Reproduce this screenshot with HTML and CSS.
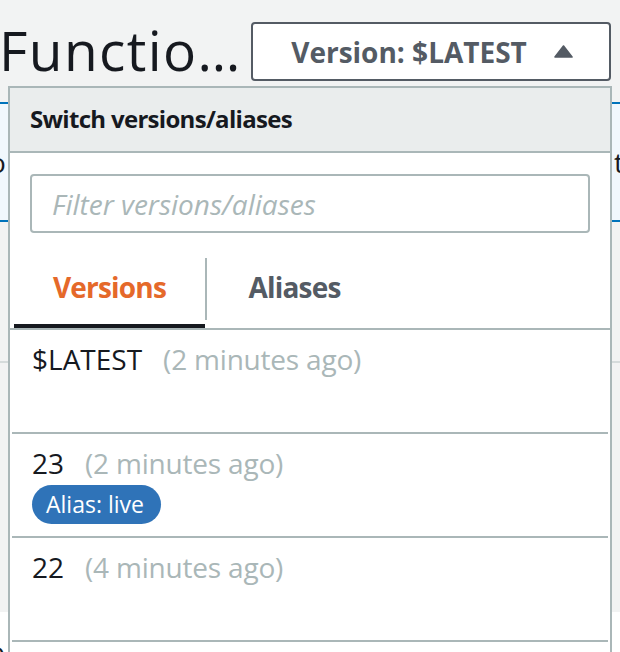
FILE: index.html
```html
<!DOCTYPE html>
<html lang="en">
<head>
<meta charset="utf-8">
<title>Function version switcher</title>
<link rel="stylesheet" href="styles.css">
</head>
<body>
<div class="page">
  <header class="top">
    <h1 class="title">Functio…</h1>
    <button class="version-btn" type="button">
      <span class="version-label">Version: $LATEST</span>
      <svg class="caret" width="19" height="13" viewBox="0 0 19 13" aria-hidden="true"><polygon points="9.5,1 18,12 1,12" fill="#545b64" stroke="#545b64" stroke-width="1.6" stroke-linejoin="round"/></svg>
    </button>
  </header>

  <section class="overview">
    <span class="ov-left">o</span>
    <span class="ov-right">t</span>
  </section>

  <section class="card"></section>

  <section class="lower"><span class="low-left">o</span></section>

  <div class="dropdown">
    <div class="dd-head">Switch versions/aliases</div>
    <div class="dd-filter">
      <input class="filter-input" type="text" placeholder="Filter versions/aliases">
    </div>
    <div class="tabs">
      <div class="tab tab-active tab-versions">Versions</div>
      <span class="tab-sep"></span>
      <div class="tab tab-aliases">Aliases</div>
    </div>
    <ul class="rows">
      <li class="row">
        <div class="row-line"><span class="row-name">$LATEST</span><span class="row-time">(2 minutes ago)</span></div>
      </li>
      <li class="row">
        <div class="row-line"><span class="row-name">23</span><span class="row-time">(2 minutes ago)</span></div>
        <span class="badge">Alias: live</span>
      </li>
      <li class="row">
        <div class="row-line"><span class="row-name">22</span><span class="row-time">(4 minutes ago)</span></div>
      </li>
      <li class="row"></li>
    </ul>
  </div>
</div>
</body>
</html>
```

FILE: styles.css
```css
* { box-sizing: border-box; }

html, body {
  margin: 0;
  padding: 0;
  overflow: hidden;
}

body {
  font-family: "Open Sans", "Liberation Sans", sans-serif;
  font-stretch: 100%;
  color: #16191f;
  background: #f2f3f3;
}

.page {
  position: relative;
  width: 620px;
  height: 652px;
  overflow: hidden;
  background: #f2f3f3;
}

/* ---------- top bar ---------- */
.top {
  height: 102px;
  display: flex;
  align-items: flex-start;
  justify-content: space-between;
  padding-right: 9px;
}

.title {
  margin: 18px 0 0 -1px;
  font-size: 55px;
  line-height: 64px;
  font-weight: 400;
  font-stretch: 97%;
  letter-spacing: 1.4px;
  white-space: nowrap;
  color: #16191f;
}

.version-btn {
  margin-top: 22px;
  width: 360px;
  height: 59px;
  display: flex;
  align-items: center;
  justify-content: center;
  gap: 27px;
  background: #ffffff;
  border: 2px solid #545b64;
  border-radius: 4px;
  font-family: inherit;
  font-stretch: 96%;
  font-size: 28px;
  font-weight: 700;
  color: #545b64;
  padding: 0 0 0 2px;
}

.caret { display: block; }

/* ---------- background content ---------- */
.overview {
  height: 120px;
  border-top: 2px solid #0073bb;
  border-bottom: 2px solid #0073bb;
  background: #f1f8fd;
  display: flex;
  justify-content: space-between;
  align-items: center;
  font-size: 28px;
}

.ov-left { margin-left: -11px; }
.ov-right { margin-right: -4px; }

.card {
  margin-top: 139px;
  height: 251px;
  border-top: 2px solid #d5dbdb;
  background: #f2f3f3;
}

.lower {
  height: 200px;
  background: #ffffff;
  font-size: 28px;
  padding-top: 20px;
}

.low-left { margin-left: -12px; }

/* ---------- dropdown ---------- */
.dropdown {
  position: absolute;
  left: 8px;
  top: 86px;
  width: 604px;
  height: 620px;
  background: #ffffff;
  border: 2px solid #aab7b8;
}

.dd-head {
  height: 65px;
  background: #eaeded;
  border-bottom: 2px solid #aab7b8;
  padding: 0 0 3px 20px;
  display: flex;
  align-items: center;
  font-size: 24px;
  font-stretch: 90%;
  letter-spacing: -0.7px;
  font-weight: 700;
  color: #16191f;
}

.dd-filter {
  padding: 21px 20px 0 20px;
}

.filter-input {
  display: block;
  width: 100%;
  height: 59px;
  border: 2px solid #aab7b8;
  border-radius: 4px;
  padding: 0 20px;
  font-family: inherit;
  font-stretch: 93%;
  font-size: 28px;
  color: #16191f;
  background: #ffffff;
  outline: none;
}

.filter-input::placeholder {
  color: #aab7b8;
  font-style: italic;
}

.tabs {
  display: flex;
  align-items: flex-start;
  padding: 25px 0 0 4px;
  border-bottom: 2px solid #aab7b8;
}

.tab {
  height: 70px;
  padding-top: 10px;
  line-height: 38px;
  text-align: center;
  font-size: 28px;
  font-stretch: 94%;
  letter-spacing: -0.8px;
  font-weight: 700;
  color: #545b64;
  border-bottom: 4px solid transparent;
}

.tab-versions { width: 191px; }
.tab-aliases { width: 175px; }

.tab-active {
  color: #e5692a;
  border-bottom-color: #16191f;
}

.tab-sep {
  width: 2px;
  height: 62px;
  background: #aab7b8;
}

.rows {
  list-style: none;
  margin: 0;
  padding: 0;
}

.row {
  height: 104px;
  margin: 0 2px;
  padding-top: 11px;
  border-bottom: 2px solid #aab7b8;
}

.row-line {
  display: flex;
  align-items: baseline;
  gap: 21px;
  padding-left: 20px;
  font-size: 28px;
  font-stretch: 98%;
  line-height: 36px;
}

.row-name { color: #16191f; }
.row-time { color: #aab7b8; letter-spacing: -0.2px; }

.badge {
  display: inline-flex;
  align-items: center;
  margin: 4px 0 0 20px;
  height: 39px;
  padding: 0 17px 2px 14px;
  border-radius: 20px;
  background: #2f73b8;
  color: #ffffff;
  font-size: 23px;
  font-weight: 500;
  font-stretch: 100%;
}
```
